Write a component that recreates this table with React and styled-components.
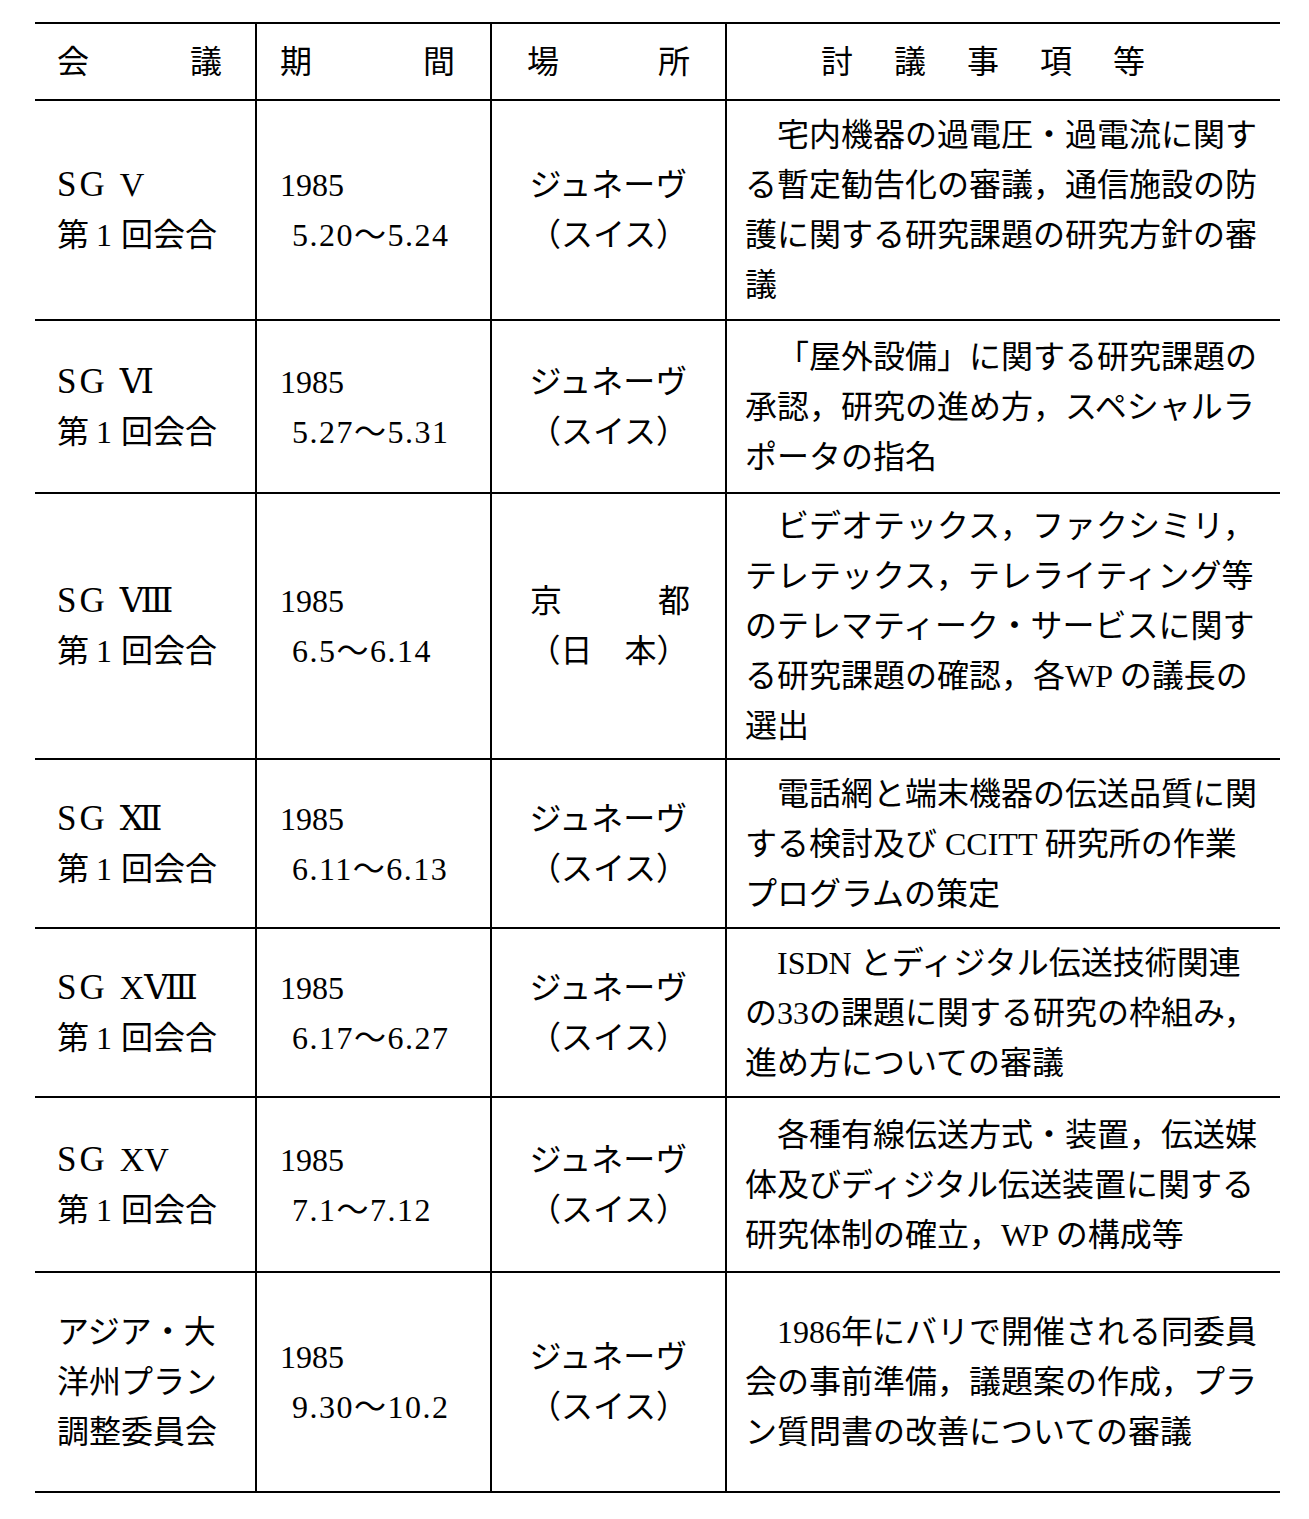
import styled, { createGlobalStyle } from "styled-components";

const GlobalStyle = createGlobalStyle`
  html, body {
    margin: 0;
    padding: 0;
    background: #fff;
  }
  body {
    font-family: "Liberation Serif", "Noto Sans CJK JP", serif;
    color: #000;
  }
`;

const Page = styled.div`
  width: 1309px;
  min-height: 1519px;
  padding: 22px 29px 0 35px;
  box-sizing: border-box;
`;

const Table = styled.div`
  width: 1245px;
  border-top: 2px solid #000;
`;

const Row = styled.div`
  display: grid;
  grid-template-columns: 220px 235px 235px 1fr;
  height: ${({ $h }) => $h}px;
  border-bottom: 2px solid #000;
  box-sizing: border-box;
`;

const Cell = styled.div`
  display: flex;
  flex-direction: column;
  justify-content: center;
  border-left: ${({ $first }) => ($first ? "none" : "2px solid #000")};
  font-size: 32px;
  line-height: 50px;
  white-space: nowrap;
`;

const HeadCell = styled(Cell)`
  flex-direction: row;
  align-items: center;
  justify-content: space-between;
  padding: 0 ${({ $pr }) => $pr}px 0 ${({ $pl }) => $pl}px;
`;

const HeadWide = styled(Cell)`
  align-items: center;
  letter-spacing: 41px;
`;

const NameCell = styled(Cell)`
  padding-left: 22px;
`;

const Group = styled.span`
  font-size: 35px;
  letter-spacing: 3px;
`;

const Numeral = styled.span`
  font-family: "Liberation Serif", "DejaVu Serif", "Noto Sans CJK JP", serif;
  font-size: 34px;
  margin-left: 12px;
`;

const Num = styled.span`
  margin: 0 9px 0 7px;
`;

const DateCell = styled(Cell)`
  padding-left: 23px;
`;

const Range = styled.div`
  margin-left: 12px;
  letter-spacing: 1.5px;
`;

const PlaceCell = styled(Cell)`
  align-items: center;
`;

const Spread = styled.div`
  align-self: stretch;
  display: flex;
  justify-content: space-between;
  padding: 0 35px 0 38px;
`;

const TopicCell = styled(Cell)`
  padding-left: 18px;
`;

const TopicLine = styled.div`
  text-indent: ${({ $indent }) => ($indent ? "1em" : "0")};
`;

const rows = [
  {
    h: 220,
    name: ["SG", "V"],
    date: "5.20〜5.24",
    topic: [
      "宅内機器の過電圧・過電流に関す",
      "る暫定勧告化の審議，通信施設の防",
      "護に関する研究課題の研究方針の審",
      "議",
    ],
  },
  {
    h: 173,
    name: ["SG", "Ⅵ"],
    date: "5.27〜5.31",
    topic: [
      "「屋外設備」に関する研究課題の",
      "承認，研究の進め方，スペシャルラ",
      "ポータの指名",
    ],
  },
  {
    h: 266,
    name: ["SG", "Ⅷ"],
    date: "6.5〜6.14",
    kyoto: true,
    topic: [
      "ビデオテックス，ファクシミリ，",
      "テレテックス，テレライティング等",
      "のテレマティーク・サービスに関す",
      "る研究課題の確認，各WP の議長の",
      "選出",
    ],
  },
  {
    h: 169,
    name: ["SG", "Ⅻ"],
    date: "6.11〜6.13",
    topic: [
      "電話網と端末機器の伝送品質に関",
      "する検討及び CCITT 研究所の作業",
      "プログラムの策定",
    ],
  },
  {
    h: 169,
    name: ["SG", "XⅧ"],
    date: "6.17〜6.27",
    topic: [
      "ISDN とディジタル伝送技術関連",
      "の33の課題に関する研究の枠組み，",
      "進め方についての審議",
    ],
  },
  {
    h: 175,
    name: ["SG", "XV"],
    date: "7.1〜7.12",
    topic: [
      "各種有線伝送方式・装置，伝送媒",
      "体及びディジタル伝送装置に関する",
      "研究体制の確立，WP の構成等",
    ],
  },
  {
    h: 220,
    custom: ["アジア・大", "洋州プラン", "調整委員会"],
    date: "9.30〜10.2",
    topic: [
      "1986年にバリで開催される同委員",
      "会の事前準備，議題案の作成，プラ",
      "ン質問書の改善についての審議",
    ],
  },
];

export default function App() {
  return (
    <Page>
      <GlobalStyle />
      <Table>
        <Row $h={77}>
          <HeadCell $first $pl={22} $pr={33}>
            <span>会</span>
            <span>議</span>
          </HeadCell>
          <HeadCell $pl={23} $pr={35}>
            <span>期</span>
            <span>間</span>
          </HeadCell>
          <HeadCell $pl={35} $pr={35}>
            <span>場</span>
            <span>所</span>
          </HeadCell>
          <HeadWide>討議事項等</HeadWide>
        </Row>
        {rows.map((r, i) => (
          <Row key={i} $h={r.h}>
            <NameCell $first>
              {r.custom ? (
                r.custom.map((l) => <div key={l}>{l}</div>)
              ) : (
                <>
                  <div>
                    <Group>{r.name[0]}</Group>
                    <Numeral>{r.name[1]}</Numeral>
                  </div>
                  <div>
                    第<Num>1</Num>回会合
                  </div>
                </>
              )}
            </NameCell>
            <DateCell>
              <div>1985</div>
              <Range>{r.date}</Range>
            </DateCell>
            <PlaceCell>
              {r.kyoto ? (
                <>
                  <Spread>
                    <span>京</span>
                    <span>都</span>
                  </Spread>
                  <div>（日　本）</div>
                </>
              ) : (
                <>
                  <div>ジュネーヴ</div>
                  <div>（スイス）</div>
                </>
              )}
            </PlaceCell>
            <TopicCell>
              {r.topic.map((l, j) => (
                <TopicLine key={j} $indent={j === 0}>
                  {l}
                </TopicLine>
              ))}
            </TopicCell>
          </Row>
        ))}
      </Table>
    </Page>
  );
}
